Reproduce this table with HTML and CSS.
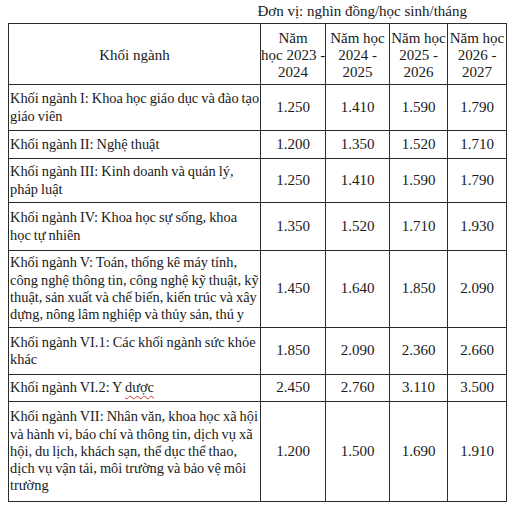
FILE: index.html
```html
<!DOCTYPE html>
<html lang="vi">
<head>
<meta charset="utf-8">
<title>Học phí</title>
<link rel="stylesheet" href="styles.css">
</head>
<body>
<div class="page">
  <div class="unit">Đơn vị: nghìn đồng/học sinh/tháng</div>
  <table class="fees">
    <colgroup>
      <col class="c-name">
      <col class="c-y1">
      <col class="c-y2">
      <col class="c-y3">
      <col class="c-y4">
    </colgroup>
    <thead>
      <tr class="h-head">
        <th class="center">Khối ngành</th>
        <th>Năm<br>học 2023 -<br>2024</th>
        <th>Năm học<br>2024 -<br>2025</th>
        <th>Năm học<br>2025 -<br>2026</th>
        <th>Năm học<br>2026 -<br>2027</th>
      </tr>
    </thead>
    <tbody>
      <tr class="h-1">
        <td class="name">Khối ngành I: Khoa học giáo dục và đào tạo giáo viên</td>
        <td>1.250</td><td>1.410</td><td>1.590</td><td>1.790</td>
      </tr>
      <tr class="h-2">
        <td class="name">Khối ngành II: Nghệ thuật</td>
        <td>1.200</td><td>1.350</td><td>1.520</td><td>1.710</td>
      </tr>
      <tr class="h-3">
        <td class="name">Khối ngành III: Kinh doanh và quản lý, pháp luật</td>
        <td>1.250</td><td>1.410</td><td>1.590</td><td>1.790</td>
      </tr>
      <tr class="h-4">
        <td class="name">Khối ngành IV: Khoa học sự sống, khoa học tự nhiên</td>
        <td>1.350</td><td>1.520</td><td>1.710</td><td>1.930</td>
      </tr>
      <tr class="h-5">
        <td class="name">Khối ngành V: Toán, thống kê máy tính, công nghệ thông tin, công nghệ kỹ thuật, kỹ thuật, sản xuất và chế biến, kiến trúc và xây dựng, nông lâm nghiệp và thủy sản, thú y</td>
        <td>1.450</td><td>1.640</td><td>1.850</td><td>2.090</td>
      </tr>
      <tr class="h-6">
        <td class="name">Khối ngành VI.1: Các khối ngành sức khỏe khác</td>
        <td>1.850</td><td>2.090</td><td>2.360</td><td>2.660</td>
      </tr>
      <tr class="h-7">
        <td class="name">Khối ngành VI.2: Y <span class="spell">dược</span></td>
        <td>2.450</td><td>2.760</td><td>3.110</td><td>3.500</td>
      </tr>
      <tr class="h-8">
        <td class="name">Khối ngành VII: Nhân văn, khoa học xã hội và hành vi, báo chí và thông tin, dịch vụ xã hội, du lịch, khách sạn, thể dục thể thao, dịch vụ vận tải, môi trường và bảo vệ môi trường</td>
        <td>1.200</td><td>1.500</td><td>1.690</td><td>1.910</td>
      </tr>
    </tbody>
  </table>
</div>
</body>
</html>
```

FILE: styles.css
```css
html, body {
  margin: 0;
  padding: 0;
  background: #ffffff;
}

.page {
  padding: 0 8px;
  font-family: "Liberation Serif", "Times New Roman", serif;
  font-size: 14.4px;
  line-height: 17.3px;
  color: #1a1a1a;
}

.unit {
  height: 23px;
  padding-right: 38px;
  text-align: right;
  line-height: 22px;
  font-size: 15px;
}

.fees {
  border-collapse: collapse;
  table-layout: fixed;
  width: 498px;
}

.c-name { width: 252px; }
.c-y1 { width: 65px; }
.c-y2 { width: 64px; }
.c-y3 { width: 58px; }
.c-y4 { width: 59px; }

.fees th,
.fees td {
  border: 1.5px solid #2b2b2b;
  padding: 0;
  text-align: center;
  vertical-align: middle;
  font-weight: normal;
  font-size: 15px;
}

.fees th {
  white-space: nowrap;
  padding-top: 3px;
}

.fees td.name {
  text-align: left;
  padding-left: 1px;
  padding-right: 0;
  font-size: 14.4px;
  word-spacing: -0.6px;
}

.h-head { height: 61px; }
.h-1 { height: 46px; }
.h-2 { height: 28px; }
.h-3 { height: 44px; }
.h-4 { height: 48px; }
.h-5 { height: 77px; }
.h-6 { height: 47px; }
.h-7 { height: 27px; }
.h-8 { height: 100px; }

.spell {
  text-decoration: underline wavy #d03030;
  text-decoration-thickness: 1px;
  text-underline-offset: 3px;
}
```
